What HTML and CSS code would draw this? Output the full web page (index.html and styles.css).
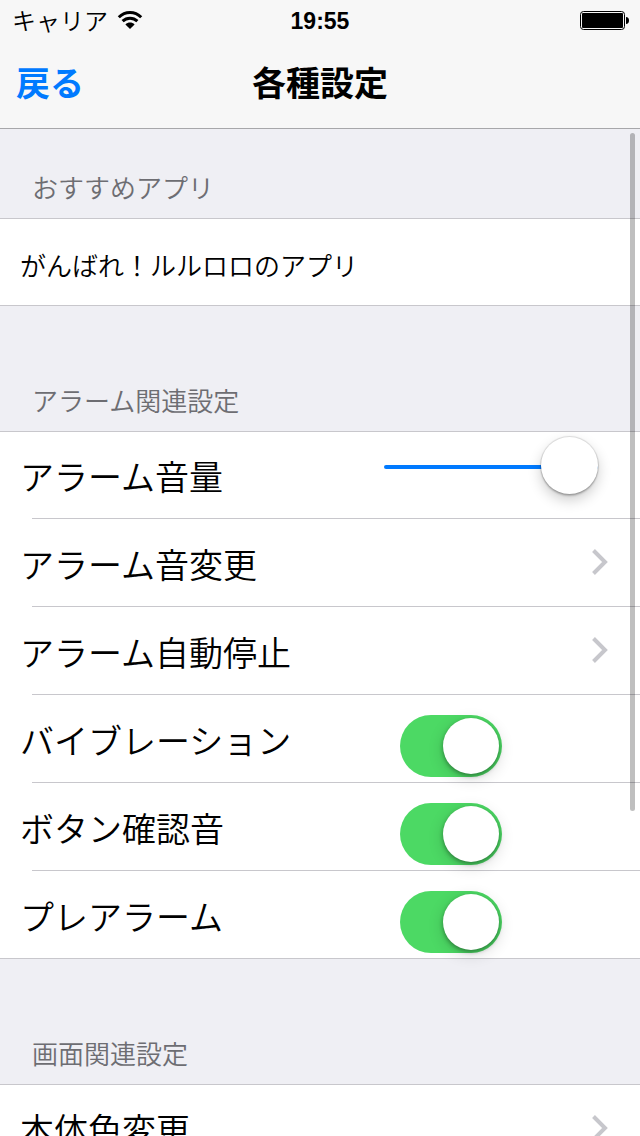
FILE: index.html
```html
<!DOCTYPE html>
<html lang="ja">
<head>
<meta charset="utf-8">
<meta name="viewport" content="width=device-width">
<title>各種設定</title>
<link rel="stylesheet" href="styles.css">
</head>
<body>
<div class="app">
  <header class="topbar">
    <div class="status">
      <div class="status-carrier">
        <span>キャリア</span>
        <svg class="wifi" viewBox="0 0 26 20" width="26" height="20" aria-hidden="true">
          <path d="M1.8 7.2C8.2 .9 17.8 .9 24.2 7.2" fill="none" stroke="#000" stroke-width="3"/>
          <path d="M5.6 11.2C9.8 7.2 16.2 7.2 20.4 11.2" fill="none" stroke="#000" stroke-width="3"/>
          <path d="M8.4 14.4C11 11.9 15 11.9 17.6 14.4L13 19Z"/>
        </svg>
      </div>
      <time class="status-time">19:55</time>
      <svg class="battery" viewBox="0 0 50 20" width="50" height="20" aria-hidden="true">
        <rect x=".5" y="1.5" width="44" height="18" rx="3" fill="none" stroke="#000"/>
        <rect x="2" y="3" width="41" height="15" rx="1"/>
        <path d="M46 7Q49 7.4 49 10.5T46 14Z"/>
      </svg>
    </div>
    <nav class="navbar">
      <button class="back" type="button">戻る</button>
      <h1 class="title">各種設定</h1>
    </nav>
  </header>

  <main class="content">
    <section class="group">
      <h2 class="group-title group-title-first">おすすめアプリ</h2>
      <ul class="rows">
        <li class="row"><a class="row-link row-small" href="#">がんばれ！ルルロロのアプリ</a></li>
      </ul>
    </section>

    <section class="group">
      <h2 class="group-title">アラーム関連設定</h2>
      <ul class="rows">
        <li class="row">
          <label class="row-label" for="volume">アラーム音量</label>
          <input class="slider" id="volume" type="range" min="0" max="100" value="100">
        </li>
        <li class="row">
          <a class="row-link" href="#">アラーム音変更
            <svg class="chevron" viewBox="0 0 16 26" width="16" height="26" aria-hidden="true"><path d="M1.5 1.5L13 13L1.5 24.5"/></svg>
          </a>
        </li>
        <li class="row">
          <a class="row-link" href="#">アラーム自動停止
            <svg class="chevron" viewBox="0 0 16 26" width="16" height="26" aria-hidden="true"><path d="M1.5 1.5L13 13L1.5 24.5"/></svg>
          </a>
        </li>
        <li class="row">
          <label class="row-label" for="vibration">バイブレーション</label>
          <input class="switch" id="vibration" type="checkbox" checked>
        </li>
        <li class="row">
          <label class="row-label" for="button-sound">ボタン確認音</label>
          <input class="switch" id="button-sound" type="checkbox" checked>
        </li>
        <li class="row">
          <label class="row-label" for="pre-alarm">プレアラーム</label>
          <input class="switch" id="pre-alarm" type="checkbox" checked>
        </li>
      </ul>
    </section>

    <section class="group">
      <h2 class="group-title">画面関連設定</h2>
      <ul class="rows">
        <li class="row">
          <a class="row-link" href="#">本体色変更
            <svg class="chevron" viewBox="0 0 16 26" width="16" height="26" aria-hidden="true"><path d="M1.5 1.5L13 13L1.5 24.5"/></svg>
          </a>
        </li>
      </ul>
    </section>
  </main>
  <div class="scroll-indicator"></div>
</div>
</body>
</html>
```

FILE: styles.css
```css
* {
  box-sizing: border-box;
}

body {
  margin: 0;
  background: #efeff4;
  color: #000;
  font-family: "Noto Sans CJK JP", sans-serif;
  font-weight: 350;
}

.app {
  position: relative;
  display: flex;
  flex-direction: column;
  height: 100vh;
}

.topbar {
  flex: none;
  background: #f7f7f7;
  border-bottom: 1px solid #a7a7aa;
}

.status {
  display: grid;
  grid-template-columns: 1fr auto 1fr;
  align-items: center;
  height: 40px;
  padding: 0 12px;
  font-size: 24px;
  line-height: 38px;
}

.status-carrier {
  display: flex;
  align-items: center;
  gap: 9px;
}

.status-time {
  padding-top: 2px;
  font-family: "Liberation Sans", Arial, sans-serif;
  font-size: 23px;
  font-weight: 700;
}

.battery {
  justify-self: end;
  margin-right: -2px;
}

.navbar {
  display: grid;
  grid-template-columns: 1fr auto 1fr;
  align-items: center;
  height: 88px;
  padding: 0 16px 6px;
}

.back {
  justify-self: start;
  padding: 0;
  border: 0;
  background: none;
  color: #007aff;
  font: inherit;
  font-size: 34px;
  font-weight: 700;
}

.title {
  margin: 0;
  font-size: 34px;
  font-weight: 700;
}

.content {
  flex: 1;
  min-height: 0;
  overflow-y: auto;
  scrollbar-width: none;
}

.group-title {
  display: flex;
  align-items: flex-end;
  height: 125px;
  margin: 0;
  padding: 0 32px 13px;
  color: #6d6d72;
  font-size: 26px;
  font-weight: inherit;
  line-height: 36px;
}

.group-title-first {
  height: 89px;
}

.rows {
  margin: 0;
  padding: 0;
  list-style: none;
  background: #fff;
  border-bottom: 1px solid #c8c7cc;
}

.row {
  display: flex;
  align-items: center;
  justify-content: space-between;
  height: 88px;
  padding-left: 20px;
  font-size: 34px;
  background: linear-gradient(#c8c7cc, #c8c7cc) 32px 0 / 100% 1px no-repeat;
}

.row:first-child {
  height: 87px;
  background-position: 0 0;
}

.row-label {
  padding-top: 2px;
}

.row-link {
  display: flex;
  flex: 1;
  align-items: center;
  justify-content: space-between;
  padding: 2px 32px 0 0;
  color: inherit;
  text-decoration: none;
}

.row-small {
  padding-top: 6px;
  font-size: 26px;
}

.chevron {
  margin-bottom: 2px;
  fill: none;
  stroke: #c7c7cc;
  stroke-width: 4;
}

.slider {
  width: 214px;
  height: 58px;
  margin: 0 42px 15px 0;
  appearance: none;
  background: none;
}

.slider::-webkit-slider-runnable-track {
  height: 4px;
  border-radius: 2px;
  background: #007aff;
}

.slider::-webkit-slider-thumb {
  width: 57px;
  height: 57px;
  margin-top: -28px;
  appearance: none;
  border-radius: 50%;
  background: #fff;
  box-shadow: 0 0 1px 1px rgba(0, 0, 0, 0.12), 0 2px 2px rgba(0, 0, 0, 0.2), 0 6px 14px rgba(0, 0, 0, 0.2);
}

.switch {
  display: flex;
  align-self: flex-end;
  justify-content: flex-end;
  width: 102px;
  height: 62px;
  margin: 0 138px 5px 0;
  padding: 3px;
  appearance: none;
  border-radius: 31px;
  background: #e5e5ea;
}

.switch:not(:checked) {
  justify-content: flex-start;
}

.switch:checked {
  background: #4cd964;
}

.switch::before {
  content: "";
  width: 56px;
  height: 56px;
  border-radius: 50%;
  background: #fff;
  box-shadow: 0 2px 4px rgba(0, 0, 0, 0.35), 0 4px 16px rgba(0, 0, 0, 0.16);
}

.scroll-indicator {
  position: absolute;
  top: 133px;
  right: 5px;
  width: 5px;
  height: 678px;
  border-radius: 3px;
  background: rgba(0, 0, 0, 0.25);
}
```
